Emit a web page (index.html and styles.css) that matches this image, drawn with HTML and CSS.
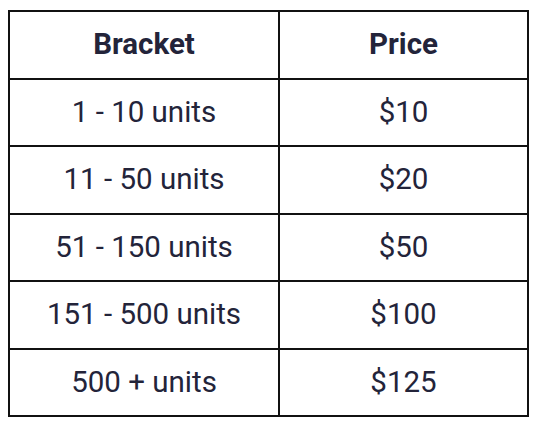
FILE: index.html
```html
<!DOCTYPE html>
<html>
<head>
<meta charset="utf-8">
<link rel="stylesheet" href="styles.css">
</head>
<body>
<table class="price-table">
  <colgroup>
    <col class="col-bracket">
    <col class="col-price">
  </colgroup>
  <thead>
    <tr><th>Bracket</th><th>Price</th></tr>
  </thead>
  <tbody>
    <tr><td>1 - 10 units</td><td>$10</td></tr>
    <tr><td>11 - 50 units</td><td>$20</td></tr>
    <tr><td>51 - 150 units</td><td>$50</td></tr>
    <tr><td>151 - 500 units</td><td>$100</td></tr>
    <tr><td>500 + units</td><td>$125</td></tr>
  </tbody>
</table>
</body>
</html>
```
FILE: styles.css
```css
html, body {
  margin: 0;
  background: #ffffff;
}
body {
  padding: 10px 7px 0 8px;
  font-family: Roboto, "Liberation Sans", sans-serif;
  color: #23243a;
}
.price-table {
  border-collapse: collapse;
  width: 519px;
  table-layout: fixed;
}
.col-bracket { width: 270px; }
.col-price { width: 249px; }
.price-table th,
.price-table td {
  border: 2px solid #111111;
  text-align: center;
  padding: 16px 0;
  line-height: 33.5px;
  font-size: 29.5px;
}
.price-table th {
  font-weight: 700;
}
.price-table td {
  font-weight: 400;
}
```
